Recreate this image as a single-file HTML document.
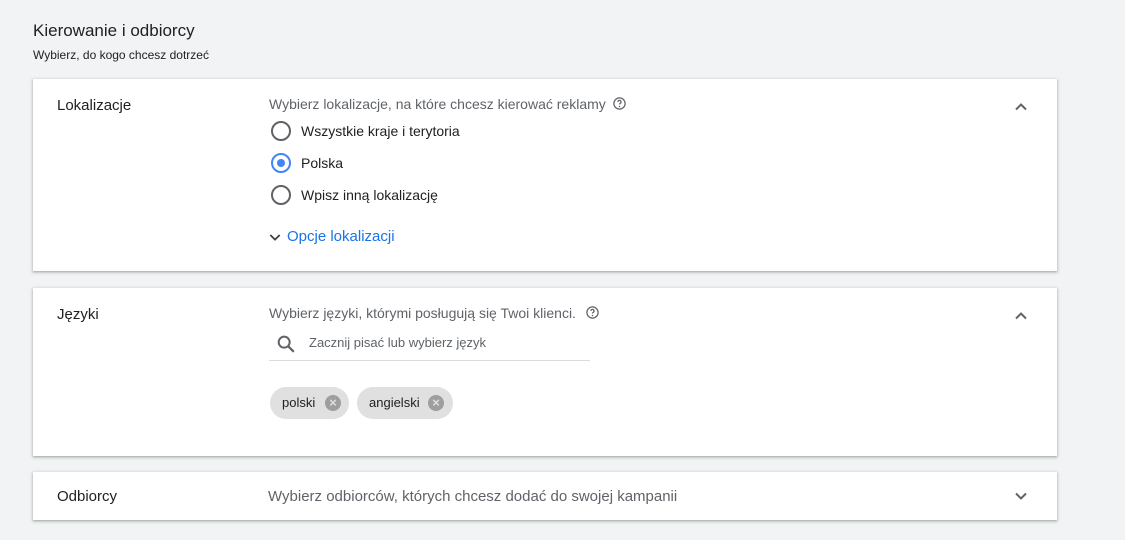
<!DOCTYPE html><html><head><meta charset="utf-8"><style>
body{margin:0;width:1125px;height:540px;background:#f1f3f4;font-family:"Liberation Sans",Roboto,sans-serif;position:relative;overflow:hidden}
.a{position:absolute;white-space:nowrap}
.card{position:absolute;left:33px;width:1024px;background:#fff;box-shadow:0 1px 2px rgba(60,64,67,.3),0 1px 3px 1px rgba(60,64,67,.15)}
.t{font-size:15px;color:#202124}
.s{font-size:14px;color:#5f6368}
.r{position:absolute;width:16px;height:16px;border:2px solid #5f6368;border-radius:50%}
.chip{position:absolute;height:32px;border-radius:16px;background:#e0e0e0;font-size:13px;color:#202124;line-height:32px;padding-left:12px}
.x{position:absolute;top:8px;width:16px;height:16px;border-radius:50%;background:#9e9e9e;color:#e0e0e0;font-size:13px;line-height:16px;text-align:center;font-weight:bold}
</style></head><body>
<div class="a" style="left:33px;top:21px;font-size:17px;color:#202124">Kierowanie i odbiorcy</div>
<div class="a" style="left:33px;top:48px;font-size:12px;color:#202124">Wybierz, do kogo chcesz dotrzeć</div>

<div class="card" style="top:79px;height:192px">
<div class="a t" style="left:24px;top:18px">Lokalizacje</div>
<div class="a s" style="left:236px;top:17px">Wybierz lokalizacje, na które chcesz kierować reklamy</div>
<svg class="a" style="left:579px;top:17px" width="15" height="15" viewBox="0 0 24 24"><circle cx="12" cy="12" r="9" fill="none" stroke="#5f6368" stroke-width="2"/><path d="M9.5 9.5a2.5 2.5 0 1 1 3.5 2.3c-.7.4-1 .9-1 1.7" fill="none" stroke="#5f6368" stroke-width="2"/><circle cx="12" cy="16.8" r="1.2" fill="#5f6368"/></svg>
<svg class="a" style="left:978px;top:18px" width="20" height="20" viewBox="0 0 24 24"><path d="M6 15l6-6 6 6" fill="none" stroke="#5f6368" stroke-width="2.4"/></svg>
<div class="r" style="left:238px;top:42px"></div>
<div class="a t" style="left:268px;top:44px;font-size:14px">Wszystkie kraje i terytoria</div>
<div class="r" style="left:238px;top:74px;border-color:#4285f4"><div style="position:absolute;left:4px;top:4px;width:8px;height:8px;border-radius:50%;background:#4285f4"></div></div>
<div class="a t" style="left:268px;top:76px;font-size:14px">Polska</div>
<div class="r" style="left:238px;top:106px"></div>
<div class="a t" style="left:268px;top:108px;font-size:14px">Wpisz inną lokalizację</div>
<svg class="a" style="left:234px;top:150px" width="16" height="16" viewBox="0 0 24 24"><path d="M5 9l7 7 7-7" fill="none" stroke="#3c4043" stroke-width="2.6"/></svg>
<div class="a" style="left:254px;top:149px;font-size:15px;color:#1a73e8">Opcje lokalizacji</div>
</div>

<div class="card" style="top:288px;height:168px">
<div class="a t" style="left:24px;top:18px">Języki</div>
<div class="a s" style="left:236px;top:17px">Wybierz języki, którymi posługują się Twoi klienci.</div>
<svg class="a" style="left:552px;top:17px" width="15" height="15" viewBox="0 0 24 24"><circle cx="12" cy="12" r="9" fill="none" stroke="#5f6368" stroke-width="2"/><path d="M9.5 9.5a2.5 2.5 0 1 1 3.5 2.3c-.7.4-1 .9-1 1.7" fill="none" stroke="#5f6368" stroke-width="2"/><circle cx="12" cy="16.8" r="1.2" fill="#5f6368"/></svg>
<svg class="a" style="left:978px;top:18px" width="20" height="20" viewBox="0 0 24 24"><path d="M6 15l6-6 6 6" fill="none" stroke="#5f6368" stroke-width="2.4"/></svg>
<svg class="a" style="left:242px;top:45px" width="22" height="22" viewBox="0 0 24 24"><circle cx="10" cy="10" r="6" fill="none" stroke="#5f6368" stroke-width="2.2"/><path d="M14.5 14.5l6 6" stroke="#5f6368" stroke-width="2.4"/></svg>
<div class="a" style="left:276px;top:47px;font-size:13px;color:#5f6368">Zacznij pisać lub wybierz język</div>
<div class="a" style="left:236px;top:72px;width:321px;height:1px;background:#dadce0"></div>
<div class="chip" style="left:237px;top:99px;width:67px">polski<div class="x" style="left:55px">×</div></div>
<div class="chip" style="left:324px;top:99px;width:84px">angielski<div class="x" style="left:71px">×</div></div>
</div>

<div class="card" style="top:472px;height:48px">
<div class="a t" style="left:24px;top:16px">Odbiorcy</div>
<div class="a" style="left:235px;top:16px;font-size:15px;color:#5f6368">Wybierz odbiorców, których chcesz dodać do swojej kampanii</div>
<svg class="a" style="left:978px;top:14px" width="20" height="20" viewBox="0 0 24 24"><path d="M6 9l6 6 6-6" fill="none" stroke="#5f6368" stroke-width="2.4"/></svg>
</div>
</body></html>
